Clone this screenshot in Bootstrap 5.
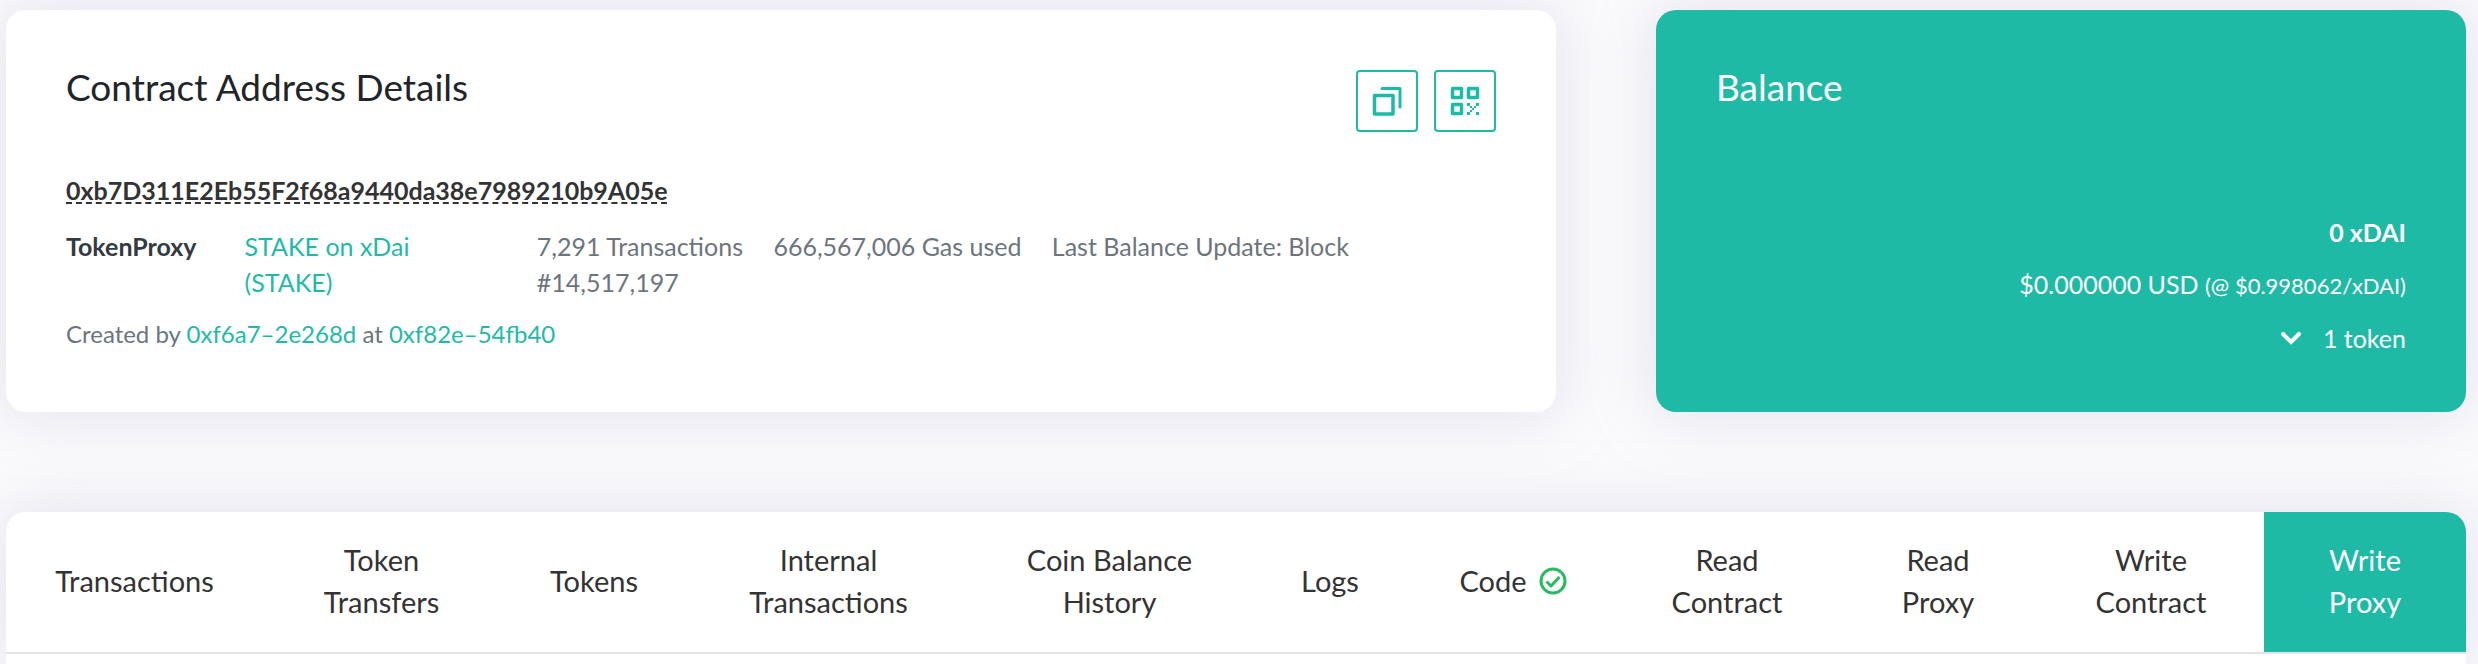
<!DOCTYPE html>
<html lang="en">
<head>
<meta charset="utf-8">
<meta name="viewport" content="width=device-width, initial-scale=1">
<title>Contract Address Details</title>
<link href="https://cdn.jsdelivr.net/npm/bootstrap@5.3.0/dist/css/bootstrap.min.css" rel="stylesheet">
<style>
  :root { --teal: #1fbaa6; }
  body { background: #fbfafc; font-family: Lato, sans-serif; font-size: 25px; line-height: 36px; color: #6c757d; }
  a { color: var(--teal); text-decoration: none; }
  .page { padding: 10px 12px 0 6px; gap: 100px; }
  .panel { border: 0; border-radius: 20px; box-shadow: 0 0 60px rgba(202, 199, 226, .5); }
  .overview { display: grid; grid-template-columns: 155fr 81fr; gap: 100px; }
  .details { padding: 60px; }
  .balance { padding: 60px 60px 56px; background: var(--teal); color: #fff; }
  .panel-title { font-size: 37px; line-height: 34px; font-weight: 400; color: #212529; }
  .balance .panel-title { color: #fff; }
  .icon-btn { width: 62px; height: 62px; border: 2px solid var(--teal); border-radius: 4px; color: var(--teal); background: #fff; }
  .address { margin: 40px 0 20px; font-size: 25px; line-height: 36px; font-weight: 700; color: #333; }
  .address span { text-decoration: underline dashed 2px; text-underline-offset: 2px; text-decoration-skip-ink: none; }
  .facts { display: grid; grid-template-columns: auto 244fr 958fr; gap: 48px; }
  .facts strong { color: #343a40; }
  .created { font-size: 24px; }
  .totals { gap: 16px; }
  .rate { font-size: 22px; }
  .tab-panel { border-radius: 20px 20px 0 0; overflow: hidden; }
  .tab-row { display: grid; grid-template-columns: 257fr 237fr 188fr 281fr 281fr 160fr 206fr 222fr 200fr 226fr 202fr; border-bottom: 2px solid #e2e2ea; }
  .tab-row .nav-link { padding: 27px 46px 29px; font-size: 29px; line-height: 42px; color: #333; }
  .tab-row .nav-link.active { background: var(--teal); color: #fff; }
  .code-tab { gap: 12px; }
  .token-toggle { gap: 22px; }
</style>
</head>
<body>
<main class="page d-flex flex-column min-vh-100">
  <div class="overview">
    <section class="card panel details">
      <div class="d-flex justify-content-between align-items-start">
        <h1 class="panel-title m-0">Contract Address Details</h1>
        <div class="d-flex gap-3">
          <button type="button" class="icon-btn d-flex align-items-center justify-content-center p-0" aria-label="Copy address">
            <svg width="30" height="30" viewBox="0 0 30 30" fill="none" stroke="currentColor" stroke-width="3.500" stroke-linejoin="round" stroke-linecap="round"><path d="M2.500 9.500h18.500v18.500H2.500z"/><path d="M10 2.500h18v18.500" stroke-width="3"/></svg>
          </button>
          <button type="button" class="icon-btn d-flex align-items-center justify-content-center p-0" aria-label="Show QR code">
            <svg width="30" height="30" viewBox="0 0 30 30" fill="none" stroke="currentColor" stroke-width="3.500" stroke-linejoin="round"><path d="M2.500 2.500h9v9h-9zM18.500 2.500h9v9h-9zM2.500 18.500h9v9h-9z"/><path d="M17 17h3v3h-3zM26 17h3v3h-3zM17 26h3v3h-3zM26 26h3v3h-3zM20 20h2v2h-2zM24 20h2v2h-2zM22 22h2v2h-2zM20 24h2v2h-2z" fill="currentColor" stroke="none"/></svg>
          </button>
        </div>
      </div>
      <h2 class="address"><span>0xb7D311E2Eb55F2f68a9440da38e7989210b9A05e</span></h2>
      <div class="facts mb-3">
        <strong>TokenProxy</strong>
        <a href="#token">STAKE on xDai (STAKE)</a>
        <div class="pe-5"><span class="me-4">7,291 Transactions</span> <span class="me-4">666,567,006 Gas used</span> Last Balance Update: Block #14,517,197</div>
      </div>
      <p class="created m-0">Created by <a href="#creator">0xf6a7–2e268d</a> at <a href="#creation">0xf82e–54fb40</a></p>
    </section>
    <section class="card panel balance">
      <h2 class="panel-title m-0">Balance</h2>
      <div class="totals d-flex flex-column text-end mt-auto">
        <strong>0 xDAI</strong>
        <div>$0.000000 USD <span class="rate">(@ $0.998062/xDAI)</span></div>
        <a href="#tokens" class="token-toggle text-white d-flex justify-content-end align-items-center"><svg width="20" height="13" viewBox="0 0 20 13" fill="none" stroke="currentColor" stroke-width="4" stroke-linecap="round"><path d="M2 2l8 8 8-8"/></svg>1 token</a>
      </div>
    </section>
  </div>
  <section class="card panel tab-panel flex-grow-1">
    <nav class="tab-row nav text-center">
      <a class="nav-link d-flex align-items-center justify-content-center" href="#transactions">Transactions</a>
      <a class="nav-link d-flex align-items-center justify-content-center" href="#transfers">Token Transfers</a>
      <a class="nav-link d-flex align-items-center justify-content-center" href="#tokens">Tokens</a>
      <a class="nav-link d-flex align-items-center justify-content-center" href="#internal">Internal Transactions</a>
      <a class="nav-link d-flex align-items-center justify-content-center" href="#history">Coin Balance History</a>
      <a class="nav-link d-flex align-items-center justify-content-center" href="#logs">Logs</a>
      <a class="nav-link code-tab d-flex align-items-center justify-content-center" href="#code">Code
        <svg class="flex-shrink-0" width="28" height="28" viewBox="0 0 28 28" fill="none" stroke="#27ba62" stroke-width="3"><circle cx="14" cy="14" r="12"/><path d="M7.500 14.500l4.500 4.500 8.500-9" stroke-linejoin="round"/></svg>
      </a>
      <a class="nav-link d-flex align-items-center justify-content-center" href="#read-contract">Read Contract</a>
      <a class="nav-link d-flex align-items-center justify-content-center" href="#read-proxy">Read Proxy</a>
      <a class="nav-link d-flex align-items-center justify-content-center" href="#write-contract">Write Contract</a>
      <a class="nav-link active d-flex align-items-center justify-content-center" href="#write-proxy" aria-current="page">Write Proxy</a>
    </nav>
  </section>
</main>
<script src="https://cdn.jsdelivr.net/npm/bootstrap@5.3.0/dist/js/bootstrap.bundle.min.js"></script>
</body>
</html>
